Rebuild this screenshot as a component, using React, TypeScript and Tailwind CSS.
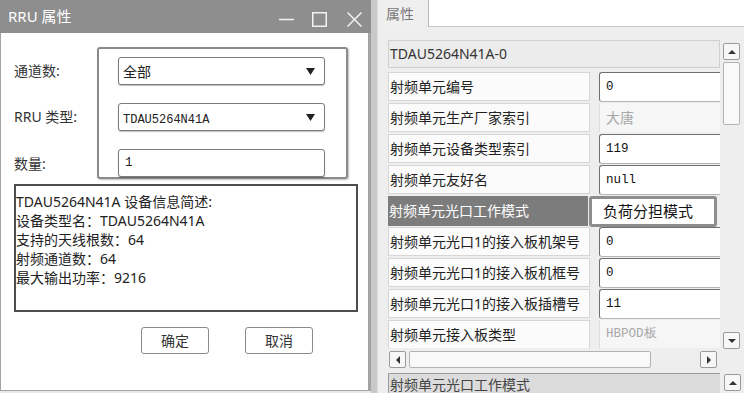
import React from "react";

type Kind = "normal" | "disabled" | "selected";
type RowDef = { label: string; value: string; kind: Kind; mono?: boolean };

const rows: RowDef[] = [
  { label: "射频单元编号", value: "0", kind: "normal", mono: true },
  { label: "射频单元生产厂家索引", value: "大唐", kind: "disabled" },
  { label: "射频单元设备类型索引", value: "119", kind: "normal", mono: true },
  { label: "射频单元友好名", value: "null", kind: "normal", mono: true },
  { label: "射频单元光口工作模式", value: "负荷分担模式", kind: "selected" },
  { label: "射频单元光口1的接入板机架号", value: "0", kind: "normal", mono: true },
  { label: "射频单元光口1的接入板机框号", value: "0", kind: "normal", mono: true },
  { label: "射频单元光口1的接入板插槽号", value: "11", kind: "normal", mono: true },
  { label: "射频单元接入板类型", value: "HBPOD板", kind: "disabled", mono: true },
];

function Tri({ dir, size = 8 }: { dir: "up" | "down" | "left" | "right"; size?: number }) {
  const pts =
    dir === "up"
      ? "0,6 4,2 8,6"
      : dir === "down"
      ? "0,2 8,2 4,6"
      : dir === "left"
      ? "6,0 6,8 2,4"
      : "2,0 2,8 6,4";
  return (
    <svg width={size} height={size} viewBox="0 0 8 8">
      <polygon points={pts} fill="#333" />
    </svg>
  );
}

function ScrollBtn({ dir }: { dir: "up" | "down" | "left" | "right" }) {
  return (
    <div className="w-[17px] h-[17px] shrink-0 flex items-center justify-center bg-[#f7f7f7] border border-[#9a9a9a] rounded-[2px]">
      <Tri dir={dir} />
    </div>
  );
}

function SelectBox({ children }: { children: React.ReactNode }) {
  return (
    <div className="h-[28px] w-[207px] flex items-center bg-white border border-[#7a7a7a] rounded-[3px] shadow-[0_1px_1px_rgba(0,0,0,0.25)] pl-[4px] pr-[9px]">
      <div className="flex-1">{children}</div>
      <svg width="9" height="7" viewBox="0 0 9 7">
        <polygon points="0,0 9,0 4.5,7" fill="#222" />
      </svg>
    </div>
  );
}

function PropRow({ r }: { r: RowDef }) {
  const sel = r.kind === "selected";
  return (
    <div className="flex h-[31px] shrink-0">
      <div
        className={
          sel
            ? "w-[200px] h-[30px] bg-[#7c7c7c] text-white flex items-center pl-[1px] text-[14px] leading-none whitespace-nowrap overflow-hidden"
            : "w-[202px] h-[29px] bg-[#fbfbfb] border border-[#d6d6d6] text-[#222] flex items-center pl-[1px] text-[14px] leading-none whitespace-nowrap overflow-hidden"
        }
      >
        {r.label}
      </div>
      {sel ? (
        <div className="ml-[1px] w-[128px] h-[31px] bg-white border-[3px] border-[#8d8d8d] rounded-[3px] flex items-center pl-[11px] text-[15px] leading-none text-[#111] whitespace-nowrap">
          {r.value}
        </div>
      ) : r.kind === "disabled" ? (
        <div
          className={
            "ml-[9px] flex-1 h-[29px] bg-[#f6f6f6] border-l border-[#dcdcdc] flex items-center pl-[6px] text-[#a8a8a8] whitespace-nowrap " +
            (r.mono ? "font-['Liberation_Mono',monospace] text-[12.5px]" : "text-[14px]")
          }
        >
          {r.value}
        </div>
      ) : (
        <div className="ml-[9px] flex-1 h-[30px] bg-white border-l border-t border-b border-[#707070] border-b-[#b5b5b5] rounded-l-[3px] flex items-center pl-[6px] text-[#111] font-['Liberation_Mono',monospace] text-[12.5px] whitespace-nowrap">
          {r.value}
        </div>
      )}
    </div>
  );
}

export default function App() {
  return (
    <div className="w-[744px] h-[393px] overflow-hidden flex bg-[#e9e9e9] font-['Noto_Sans','Noto_Sans_CJK_SC',sans-serif] text-[#222]">
      {/* Left dialog */}
      <div className="w-[371px] h-[393px] shrink-0 flex flex-col">
        <div className="h-[33px] shrink-0 bg-[#8e8e8e] flex items-center pl-[8px] text-white">
          <span className="text-[15px] leading-none">RRU 属性</span>
          <div className="ml-auto mt-[5px] mr-[9px] flex items-center">
            <svg width="15" height="15" viewBox="0 0 15 15">
              <line x1="0" y1="7.5" x2="15" y2="7.5" stroke="#f2f2f2" strokeWidth="1.5" />
            </svg>
            <svg width="15" height="15" viewBox="0 0 15 15" className="ml-[18px]">
              <rect x="0.75" y="0.75" width="13.5" height="13.5" fill="none" stroke="#f2f2f2" strokeWidth="1.5" />
            </svg>
            <svg width="15" height="15" viewBox="0 0 15 15" className="ml-[20px]">
              <line x1="0.5" y1="0.5" x2="14.5" y2="14.5" stroke="#f2f2f2" strokeWidth="1.5" />
              <line x1="14.5" y1="0.5" x2="0.5" y2="14.5" stroke="#f2f2f2" strokeWidth="1.5" />
            </svg>
          </div>
        </div>
        <div className="h-[358px] shrink-0 bg-white border-l border-r-[3px] border-b border-[#a3a3a3] flex flex-col pt-[14px]">
          <div className="flex">
            <div className="w-[96px] shrink-0 pl-[13px] pt-[10px] flex flex-col gap-[18px] text-[14px] text-[#333]">
              <div className="h-[28px] flex items-center leading-none">通道数:</div>
              <div className="h-[28px] flex items-center leading-none">RRU 类型:</div>
              <div className="h-[28px] flex items-center leading-none mt-[1px]">数量:</div>
            </div>
            <div className="w-[251px] h-[132px] shrink-0 border-2 border-[#8a8a8a] rounded-[3px] shadow-[1px_1px_2px_rgba(0,0,0,0.25)] pl-[19px] pt-[8px] flex flex-col gap-[18px]">
              <SelectBox>
                <span className="text-[14px] leading-none">全部</span>
              </SelectBox>
              <SelectBox>
                <span className="font-['Liberation_Mono',monospace] text-[12px] leading-none">TDAU5264N41A</span>
              </SelectBox>
              <div className="h-[28px] w-[207px] flex items-center bg-white border border-[#7a7a7a] rounded-[3px] shadow-[0_1px_1px_rgba(0,0,0,0.25)] pl-[6px]">
                <span className="font-['Liberation_Mono',monospace] text-[12.5px] leading-none">1</span>
              </div>
            </div>
          </div>
          <div className="ml-[13px] mt-[5px] w-[344px] h-[128px] border-2 border-[#4e4e4e] pt-[6px] text-[14px] leading-[19px] text-[#222]">
            <div>TDAU5264N41A 设备信息简述:</div>
            <div>设备类型名：TDAU5264N41A</div>
            <div>支持的天线根数：64</div>
            <div>射频通道数：64</div>
            <div>最大输出功率：9216</div>
          </div>
          <div className="flex mt-[15px] pl-[140px] gap-[36px]">
            <div className="w-[68px] h-[27px] border border-[#8a8a8a] rounded-[3px] bg-white flex items-center justify-center text-[14px] leading-none text-[#333]">
              确定
            </div>
            <div className="w-[68px] h-[27px] border border-[#8a8a8a] rounded-[3px] bg-white flex items-center justify-center text-[14px] leading-none text-[#333]">
              取消
            </div>
          </div>
        </div>
      </div>

      {/* Divider strip */}
      <div className="w-[7px] shrink-0 bg-[#c9c9c9] border-r border-[#dedede]" />

      {/* Right panel */}
      <div className="flex-1 flex flex-col bg-[#eeeeee]">
        <div className="h-[27px] shrink-0 flex">
          <div className="w-[51px] bg-[#efefef] border-r border-[#b8b8b8] flex items-center pl-[8px] text-[14px] leading-none text-[#777]">
            属性
          </div>
          <div className="flex-1 bg-white border-b border-[#c4c4c4]" />
        </div>
        <div className="flex-1 flex flex-col pl-[10px] pt-[13px]">
          <div className="flex">
            <div className="w-[332px] flex flex-col">
              <div className="h-[28px] bg-[#ececec] border border-[#cfcfcf] flex items-center pl-[1px] text-[14px] leading-none text-[#333]">
                TDAU5264N41A-0
              </div>
              <div className="mt-[4px] h-[276px] overflow-hidden flex flex-col">
                {rows.map((r, i) => (
                  <PropRow key={i} r={r} />
                ))}
              </div>
            </div>
            <div className="ml-[3px] mt-[3px] w-[17px] h-[306px] flex flex-col">
              <ScrollBtn dir="up" />
              <div className="mt-[2px] h-[63px] bg-[#f9f9f9] border border-[#b3b3b3] rounded-[2px]" />
              <div className="flex-1" />
              <ScrollBtn dir="down" />
            </div>
          </div>
          <div className="w-[332px] h-[17px] mt-[2px] flex items-center pl-[1px] pr-[3px]">
            <ScrollBtn dir="left" />
            <div className="ml-[3px] w-[242px] h-[17px] bg-[#f9f9f9] border border-[#b3b3b3] rounded-[2px]" />
            <div className="flex-1" />
            <ScrollBtn dir="right" />
          </div>
          <div className="mt-[5px] flex">
            <div className="w-[332px] h-[25px] bg-[#dcdcdc] border-l border-t border-[#9c9c9c] pl-[1px] pt-[4px] text-[14px] leading-none text-[#444] whitespace-nowrap">
              射频单元光口工作模式
            </div>
            <div className="ml-[4px] mt-[1px]">
              <ScrollBtn dir="up" />
            </div>
          </div>
        </div>
      </div>
    </div>
  );
}
